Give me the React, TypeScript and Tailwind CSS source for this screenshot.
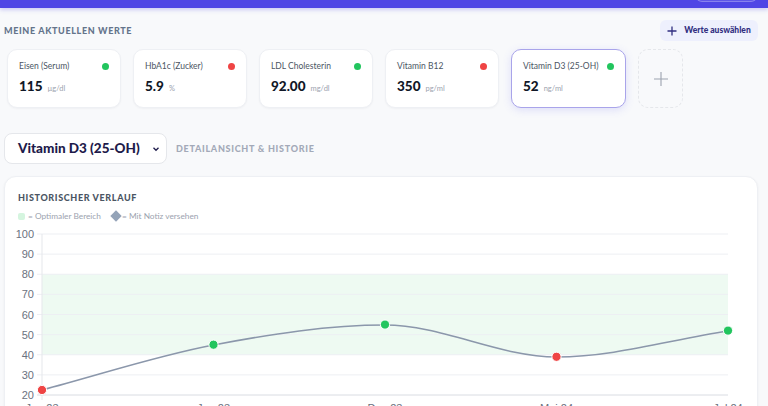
import React from 'react'

type Wert = {
    name: string
    value: string
    unit: string
    ok: boolean
    active?: boolean
}

const werte: Wert[] = [
    { name: 'Eisen (Serum)', value: '115', unit: 'µg/dl', ok: true },
    { name: 'HbA1c (Zucker)', value: '5.9', unit: '%', ok: false },
    { name: 'LDL Cholesterin', value: '92.00', unit: 'mg/dl', ok: true },
    { name: 'Vitamin B12', value: '350', unit: 'pg/ml', ok: false },
    { name: 'Vitamin D3 (25-OH)', value: '52', unit: 'ng/ml', ok: true, active: true },
]

// chart helpers, page coordinates
const yOf = (v: number) => 395 - (v - 20) * 2.0125
const xs = [42, 213.5, 385, 556.5, 728]
const punkte = [
    { v: 22.5, ok: false, label: 'Jan 23' },
    { v: 45, ok: true, label: 'Jun 23' },
    { v: 55, ok: true, label: 'Dez 23' },
    { v: 39, ok: false, label: 'Mai 24' },
    { v: 52, ok: true, label: 'Jul 24' },
]

const linePath =
    'M 42 390 C 99.2 375, 156.3 355.8, 213.5 345 ' +
    'C 270.7 334.2, 327.8 325, 385 325 ' +
    'C 442.2 325, 499.3 357, 556.5 357 ' +
    'C 613.7 357, 670.8 339.7, 728 331'

const WertCard = ({ w }: { w: Wert }) => {
    return (
        <div
            className={
                w.active
                    ? 'w-[115px] h-[59px] shrink-0 rounded-[10px] bg-white border border-[#a9a4ea] shadow-[0_2px_8px_rgba(99,102,241,0.18)] px-[11px] pt-[9px]'
                    : 'w-[114px] h-[59px] shrink-0 rounded-[10px] bg-white border border-[#eef0f4] shadow-[0_1px_2px_rgba(15,23,42,0.04)] px-[11px] pt-[9px]'
            }
        >
            <div className="flex items-center justify-between h-[14px]">
                <span className="text-[8.5px] text-[#4b5563] whitespace-nowrap">{w.name}</span>
                <span className={w.ok ? 'w-[7px] h-[7px] rounded-full bg-[#22c55e]' : 'w-[7px] h-[7px] rounded-full bg-[#ef4444]'} />
            </div>
            <div className="mt-[3px] flex items-baseline gap-[5px] h-[20px]">
                <span className="text-[13.5px] font-black text-[#111827] leading-[20px]">{w.value}</span>
                <span className="text-[7.5px] text-[#9ca3af]">{w.unit}</span>
            </div>
        </div>
    )
}

const Chart = () => {
    const ticks = [100, 90, 80, 70, 60, 50, 40, 30, 20]
    return (
        <svg width="753" height="200" viewBox="4 226 753 200" className="block">
            <rect x="42" y={yOf(80)} width="686" height={yOf(40) - yOf(80)} fill="#22c55e" fillOpacity="0.08" />
            {ticks.map((t) => (
                <g key={t}>
                    <line x1="37" x2="728" y1={yOf(t)} y2={yOf(t)} stroke={t === 20 ? '#d9dce2' : '#edeff3'} strokeWidth="1" />
                    <text x="34" y={yOf(t) + 4} textAnchor="end" fontSize="11" fill="#6b7280" fontFamily="'Liberation Sans', Arial, sans-serif">
                        {t}
                    </text>
                </g>
            ))}
            <line x1="42" x2="42" y1="234" y2="400" stroke="#e5e7eb" strokeWidth="1" />
            <path d={linePath} fill="none" stroke="#8b97ab" strokeWidth="1.6" />
            {punkte.map((p, i) => (
                <g key={i}>
                    <circle cx={xs[i]} cy={yOf(p.v)} r="4.6" fill={p.ok ? '#22c55e' : '#ef4444'} stroke="#ffffff" strokeWidth="1" />
                    <text x={xs[i]} y="412" textAnchor="middle" fontSize="11" fill="#6b7280" fontFamily="'Liberation Sans', Arial, sans-serif">
                        {p.label}
                    </text>
                </g>
            ))}
        </svg>
    )
}

export default function App() {
    return (
        <div className="min-h-screen bg-[#f8f9fb] font-['Lato',sans-serif] overflow-hidden">
            {/* header, scrolled so only its bottom shows */}
            <div className="-mt-[48px] h-[56px] bg-[#4f46e5] shadow-[0_2px_4px_rgba(79,70,229,0.25)] flex items-end justify-end pr-[11px] pb-[6px]">
                <div className="w-[61px] h-[28px] rounded-md border border-white/25 bg-white/10" />
            </div>

            <div className="pl-[4px] pr-[10px]">
                <div className="flex items-center justify-between mt-[12px] h-[21px]">
                    <h2 className="text-[9px] font-black tracking-[0.07em] text-[#64748b]">MEINE AKTUELLEN WERTE</h2>
                    <button className="h-[21px] w-[98px] rounded-md bg-[#eef0fd] flex items-center justify-center gap-[7px] text-[#312e81]">
                        <svg width="10" height="10" viewBox="0 0 10 10">
                            <path d="M5 0.5v9M0.5 5h9" stroke="#312e81" strokeWidth="1.3" />
                        </svg>
                        <span className="text-[8.5px] font-black whitespace-nowrap">Werte auswählen</span>
                    </button>
                </div>

                <div className="flex gap-[12px] mt-[8px] pl-[3px]">
                    {werte.map((w, i) => (
                        <WertCard key={i} w={w} />
                    ))}
                    <div className="w-[45px] h-[59px] shrink-0 rounded-[10px] border border-dashed border-[#e5e7eb] bg-[#f8f9fb] flex items-center justify-center">
                        <svg width="14" height="14" viewBox="0 0 14 14">
                            <path d="M7 0v14M0 7h14" stroke="#9ca3af" strokeWidth="1.1" />
                        </svg>
                    </div>
                </div>

                <div className="flex items-center mt-[25px] gap-[9px]">
                    <div className="w-[163px] h-[31px] rounded-lg bg-white border border-[#e5e7eb] flex items-center justify-between pl-[13px] pr-[6px]">
                        <span className="text-[13.5px] font-black text-[#1e1b4b] whitespace-nowrap">Vitamin D3 (25-OH)</span>
                        <svg width="8" height="8" viewBox="0 0 8 8">
                            <path d="M1.5 2.8 4 5.3 6.5 2.8" fill="none" stroke="#1e1b4b" strokeWidth="1.3" />
                        </svg>
                    </div>
                    <span className="text-[9px] font-black tracking-[0.08em] text-[#a3a9b8] whitespace-nowrap">DETAILANSICHT &amp; HISTORIE</span>
                </div>

                <div className="mt-[12px] bg-white rounded-[12px] border border-[#eef0f4] shadow-[0_1px_3px_rgba(15,23,42,0.05)] h-[260px]">
                    <div className="px-[13px] pt-[14px]">
                        <h3 className="text-[9px] font-black tracking-[0.07em] text-[#4b5563] leading-[14px]">HISTORISCHER VERLAUF</h3>
                        <div className="flex items-center mt-[4px] h-[14px] text-[8.3px] text-[#9ca3af]">
                            <span className="w-[7px] h-[7px] rounded-[2px] bg-[#d5f5df] mr-[3px]" />
                            <span>= Optimaler Bereich</span>
                            <span className="w-[8px] h-[8px] rotate-45 bg-[#94a3b8] ml-[11px] mr-[2px]" />
                            <span>= Mit Notiz versehen</span>
                        </div>
                    </div>
                    <div className="mt-[3px] -ml-px">
                        <Chart />
                    </div>
                </div>
            </div>
        </div>
    )
}
